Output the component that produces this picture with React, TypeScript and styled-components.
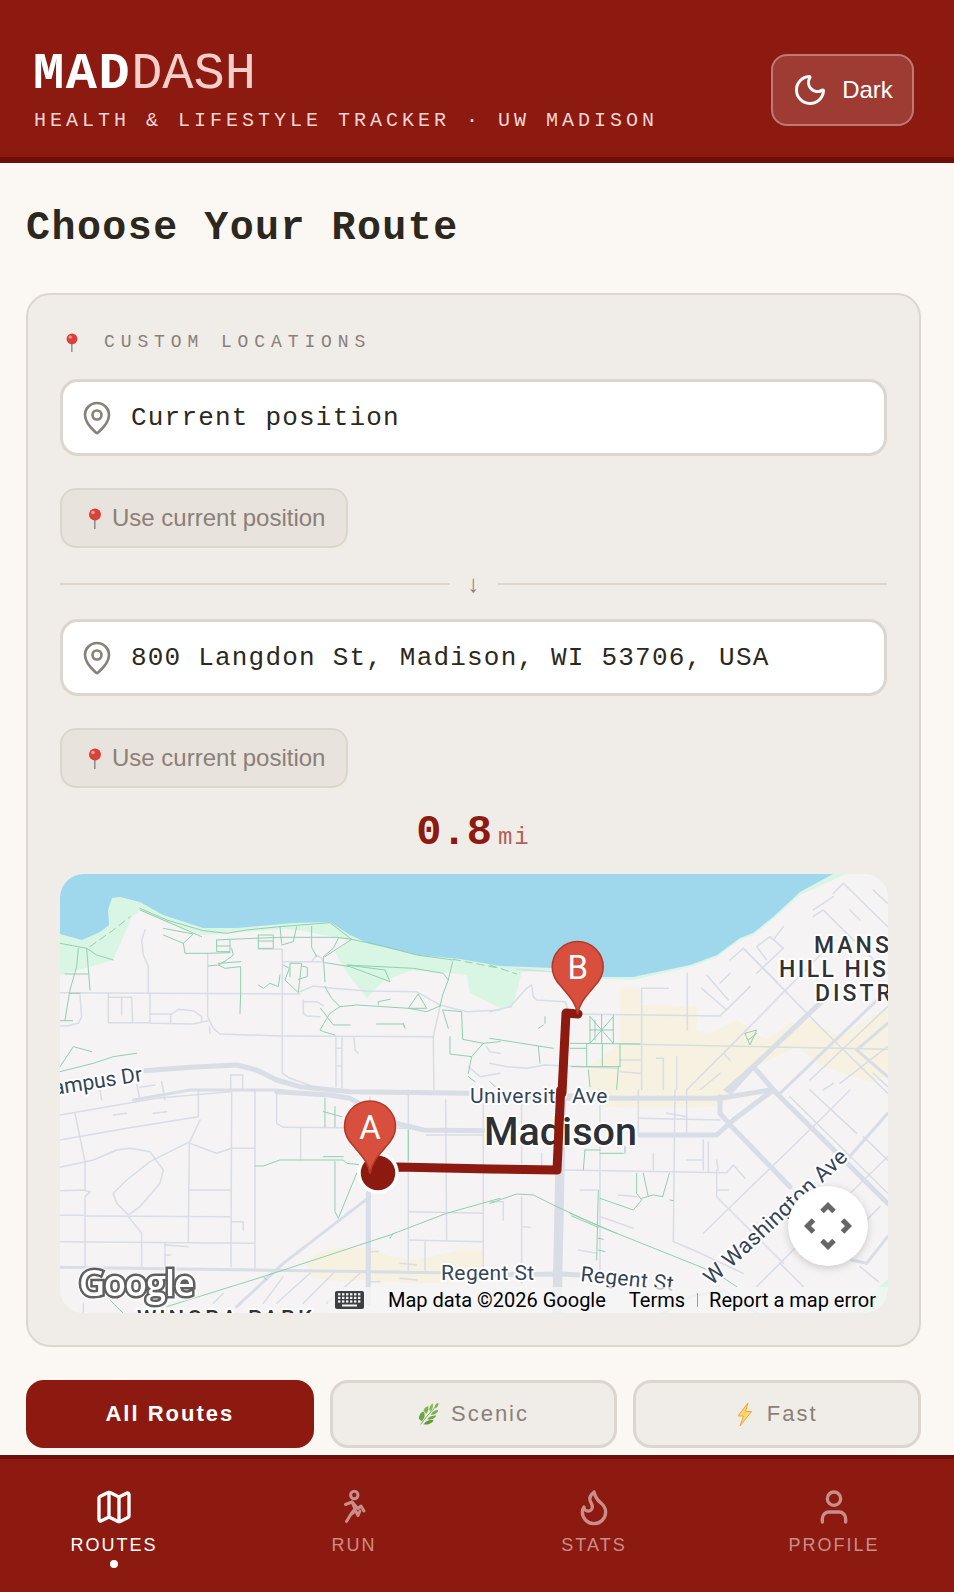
import React from "react";
import styled, { createGlobalStyle } from "styled-components";
import { Moon, MapPin, Map as MapIcon, Flame, User } from "lucide-react";

const Global = createGlobalStyle`
  html, body { margin: 0; padding: 0; background: #fbf8f4; }
  * { box-sizing: border-box; }
`;

const MONO = `"Liberation Mono", "Courier New", monospace`;
const SANS = `"Liberation Sans", Arial, sans-serif`;
const ROBOTO = `Roboto, "Liberation Sans", sans-serif`;

const Page = styled.div`
  width: 954px;
  height: 1592px;
  display: flex;
  flex-direction: column;
  overflow: hidden;
  background: #fbf8f4;
`;

const Header = styled.header`
  height: 163px;
  flex: none;
  background: #8d1a10;
  border-bottom: 6px solid #6b0f08;
  padding: 52px 40px 0 33px;
  display: flex;
  justify-content: space-between;
  align-items: flex-start;
`;
const Brand = styled.div`
  display: flex;
  flex-direction: column;
`;
const Logo = styled.div`
  font-family: ${MONO};
  font-size: 52px;
  line-height: 46px;
  color: #f7cfca;
`;
const LogoStrong = styled.span`
  font-weight: 700;
  color: #fff;
  letter-spacing: 1.5px;
`;
const Tagline = styled.div`
  margin-top: 11px;
  padding-left: 1px;
  font-family: ${MONO};
  font-size: 20px;
  line-height: 24px;
  letter-spacing: 4px;
  color: #f3d6d2;
  white-space: nowrap;
`;
const ThemeButton = styled.button`
  margin-top: 2px;
  width: 143px;
  height: 72px;
  border: 2px solid rgba(255, 255, 255, 0.32);
  border-radius: 16px;
  background: rgba(255, 255, 255, 0.15);
  color: #fff;
  font-family: ${SANS};
  font-size: 24px;
  display: flex;
  align-items: center;
  justify-content: center;
  gap: 14px;
  padding: 0;
`;

const Main = styled.main`
  flex: 1;
  min-height: 0;
  overflow: hidden;
  padding: 0 33px 0 26px;
`;
const Title = styled.h1`
  margin: 41px 0 0;
  font-family: ${MONO};
  font-weight: 700;
  font-size: 40px;
  line-height: 50px;
  letter-spacing: 1.45px;
  color: #2c2820;
`;
const Card = styled.section`
  margin-top: 39px;
  background: #f0ede8;
  border: 2px solid #dcd6cf;
  border-radius: 24px;
  padding: 32px;
`;
const SectionLabel = styled.div`
  display: flex;
  align-items: center;
  height: 28px;
  margin-top: 1px;
  gap: 25px;
  padding-left: 5px;
  font-family: ${MONO};
  font-size: 18px;
  letter-spacing: 5.9px;
  color: #8a8078;
`;
const InputBox = styled.div<{ $top: number }>`
  margin-top: ${(p) => p.$top}px;
  height: 77px;
  background: #fff;
  border: 3px solid #dcd6cf;
  border-radius: 18px;
  display: flex;
  align-items: center;
  padding-left: 16px;
  gap: 16px;
  color: #8a8078;
`;
const InputText = styled.span`
  font-family: ${MONO};
  font-size: 26px;
  letter-spacing: 1.2px;
  color: #2c2820;
  white-space: nowrap;
`;
const LocateButton = styled.button`
  display: flex;
  align-items: center;
  gap: 10px;
  margin-top: 32px;
  width: 288px;
  height: 60px;
  background: #e9e3dd;
  border: 2px solid #dcd5cc;
  border-radius: 16px;
  padding: 0 0 0 26px;
  font-family: ${SANS};
  font-size: 24px;
  color: #8a8078;
  white-space: nowrap;
`;
const Divider = styled.div`
  display: flex;
  align-items: center;
  height: 71px;
  gap: 18px;
  color: #8a8078;
  font-family: ${SANS};
  font-size: 24px;
`;
const DividerLine = styled.span`
  flex: 1;
  height: 2px;
  background: #dcd6cf;
`;
const Distance = styled.div`
  height: 86px;
  padding-top: 21px;
  display: flex;
  justify-content: center;
  align-items: baseline;
  gap: 6px;
  font-family: ${MONO};
  color: #8d1a10;
`;
const DistanceValue = styled.span`
  font-size: 42px;
  line-height: 48px;
  font-weight: 700;
`;
const DistanceUnit = styled.span`
  font-size: 24px;
  letter-spacing: 2px;
  color: #b2605a;
`;

const MapBox = styled.div`
  position: relative;
  width: 828px;
  height: 439px;
  border-radius: 24px;
  overflow: hidden;
  background: #f5f3f4;
`;
const MapSvg = styled.svg`
  display: block;
`;
const Roads = styled.g<{ $w: number; $c?: string }>`
  fill: none;
  stroke: ${(p) => p.$c || "#d8dde6"};
  stroke-width: ${(p) => p.$w};
  stroke-linecap: round;
  stroke-linejoin: round;
`;
const MapLabel = styled.text<{ $size: number; $weight?: number; $color?: string; $spacing?: number }>`
  font-family: ${ROBOTO};
  font-size: ${(p) => p.$size}px;
  font-weight: ${(p) => p.$weight || 400};
  fill: ${(p) => p.$color || "#33445a"};
  letter-spacing: ${(p) => p.$spacing || 0}px;
  stroke: #fff;
  stroke-width: 4px;
  stroke-linejoin: round;
  paint-order: stroke fill;
`;
const PinLetter = styled.text`
  font-family: ${ROBOTO};
  font-size: 33px;
  fill: #fff;
  text-anchor: middle;
`;
const GoogleMark = styled.div`
  position: absolute;
  left: 19px;
  top: 384px;
  font-family: "Open Sans", ${ROBOTO};
  font-weight: 600;
  font-size: 36px;
  line-height: 50px;
  letter-spacing: -1px;
  color: #fff;
  -webkit-text-stroke: 5px #5f5f5f;
  paint-order: stroke fill;
  filter: drop-shadow(0 0 1.5px #fff) drop-shadow(0 0 1px #fff);
`;
const Attribution = styled.div`
  position: absolute;
  right: 0;
  bottom: 0;
  height: 26px;
  width: 560px;
  background: rgba(245, 245, 245, 0.75);
  display: flex;
  align-items: center;
  padding-left: 7px;
  font-family: ${ROBOTO};
  font-size: 20px;
  color: #000;
  white-space: nowrap;
`;
const AttrData = styled.span`
  margin-left: 24px;
`;
const AttrTerms = styled.span`
  margin-left: 23px;
`;
const AttrSep = styled.span`
  width: 1px;
  height: 14px;
  background: #8aa0c0;
  margin: 0 11px 0 12px;
`;
const FullscreenButton = styled.div`
  position: absolute;
  left: 728px;
  top: 312px;
  width: 80px;
  height: 80px;
  border-radius: 50%;
  background: #fff;
  box-shadow: 0 2px 8px rgba(0, 0, 0, 0.18);
`;

const FilterRow = styled.div`
  margin-top: 33px;
  display: grid;
  grid-template-columns: repeat(3, 1fr);
  gap: 16px;
`;
const FilterButton = styled.button<{ $active?: boolean }>`
  height: 68px;
  border-radius: 18px;
  border: 3px solid ${(p) => (p.$active ? "#8d1a10" : "#dcd6cf")};
  background: ${(p) => (p.$active ? "#8d1a10" : "#f0ede8")};
  color: ${(p) => (p.$active ? "#fff" : "#8a8078")};
  font-family: ${SANS};
  font-size: 22px;
  font-weight: ${(p) => (p.$active ? 700 : 400)};
  letter-spacing: 2px;
  display: flex;
  align-items: center;
  justify-content: center;
  gap: 11px;
  padding: 0;
`;

const Nav = styled.nav`
  height: 137px;
  flex: none;
  background: #8d1a10;
  border-top: 4px solid #6b0f08;
  display: flex;
  justify-content: space-between;
  padding: 26px 68px 0 62px;
`;
const NavItem = styled.div<{ $active?: boolean }>`
  width: 104px;
  display: flex;
  flex-direction: column;
  align-items: center;
  color: ${(p) => (p.$active ? "#fff" : "#c98e89")};
`;
const NavIconSlot = styled.div`
  height: 44px;
  display: flex;
  align-items: center;
  justify-content: center;
`;
const NavLabel = styled.span`
  margin-top: 4px;
  font-family: ${SANS};
  font-size: 18px;
  line-height: 24px;
  letter-spacing: 2px;
`;
const NavDot = styled.span`
  margin-top: 3px;
  width: 8px;
  height: 8px;
  border-radius: 50%;
  background: #fff;
`;

const PinEmoji = ({ w = 14, h = 21 }: { w?: number; h?: number }) => (
  <svg width={w} height={h} viewBox="0 0 14 21" style={{ flex: "none" }}>
    <rect x="6" y="9" width="1.6" height="12" fill="#8f8f8f" />
    <circle cx="7" cy="6.5" r="6" fill="#d8423a" />
    <circle cx="5" cy="4.5" r="1.8" fill="#f49a90" />
  </svg>
);
const LeafEmoji = () => (
  <svg width="22" height="24" viewBox="0 0 24 30" preserveAspectRatio="none" style={{ flex: "none" }}>
    <path d="M3 28 C7 21 12 15 20 5" stroke="#6e9a45" strokeWidth="1" fill="none" />
    <path d="M1 21 C1 15 4 13 6 12 C8 15 8 20 4 24 Z" fill="#6aa63f" />
    <path d="M6 28 C9 23 13 22 17 23 C15 27 10 29 6 28 Z" fill="#5e9b38" />
    <path d="M6 11 C7 7 9 6 11 5 C12 8 11 12 9 15 Z" fill="#7db54c" />
    <path d="M10 22 C12 18 16 17 20 17 C19 20 15 23 10 22 Z" fill="#6cab41" />
    <path d="M12 9 C13 5 14 3 16 2 C17 5 16 9 14 12 Z" fill="#86bd55" />
    <path d="M14 16 C15 12 19 10 22 10 C22 13 19 16 14 16 Z" fill="#76b148" />
    <path d="M18 7 C18 4 20 2 22 1 C23 3 22 6 19 8 Z" fill="#7db54c" />
  </svg>
);
const BoltEmoji = () => (
  <svg width="19" height="25" viewBox="0 0 19 25" style={{ flex: "none" }}>
    <path d="M11 1 L1 14 L6.5 14 L3 24 L14.5 9.5 L8.5 9.5 Z" fill="#fbd76a" stroke="#f0a63c" strokeWidth="1" strokeLinejoin="round" />
  </svg>
);
const RunIcon = () => (
  <svg width="30" height="42" viewBox="8 4 30 42" fill="none" stroke="currentColor" strokeWidth="3" strokeLinejoin="round" strokeLinecap="round">
    <circle cx="23.3" cy="13" r="3.7" />
    <path d="M14.5 22.5 L21 20 L24 27 L20 32 L15.5 39.5" />
    <path d="M21 20 L27 26.5 L30 24 L33 29" />
    <path d="M20.5 32 L24.5 28.5 L27 33.5 L29 29" />
  </svg>
);

const green = "#8fd0b0";

const Q1 = {
  yellow: [] as string[],
  thin: [
    "30,398 750,402",
    "285,210 275,240 280,285 295,320 295,398",
    "175,402 175,488 300,488 300,402",
    "175,412 245,412 248,488",
    "215,412 215,465",
    "300,462 362,462",
    "362,490 362,465 385,448 430,452 455,470 455,485",
    "300,490 430,492 475,482",
    "473,280 473,470 490,505 510,522 695,528",
    "695,268 625,268",
    "697,268 697,640 720,655 790,680",
    "700,305 820,305",
    "785,305 800,285 815,295 820,305",
    "695,528 1150,530",
    "858,530 858,680",
    "876,530 876,685",
    "858,565 876,565",
    "858,618 876,618",
    "912,532 915,570 925,580",
    "1170,440 1150,530 1152,690",
    "760,420 760,460 770,468 810,470",
    "760,425 800,425 820,437",
    "90,405 95,470 85,490 50,498 30,498",
    "480,520 478,500",
    "542,645 542,690",
    "578,645 578,690",
    "542,645 578,645",
    "260,670 270,720",
    "335,665 345,720",
    "270,682 315,675",
    "150,690 155,720",
    "1255,620 1290,650 1350,640",
    "1310,560 1320,575 1350,580",
    "750,395 790,378 850,385 950,393 1100,395 1170,435 1250,455 1350,450",
  ],
  thick: ["285,632 420,622 560,615 620,630 680,660 750,680 900,695 1260,700"],
  mid: ["250,720 420,690 680,690 800,705"],
  green: [
    "30,250 110,265 120,390",
    "110,265 140,285 190,300",
    "270,145 350,180 460,212 530,220 590,210 690,200 840,188 905,238 1000,258 1100,285 1210,300",
    "270,150 340,180 455,230",
    "85,265 80,320 60,390 45,480",
    "45,342 115,342",
    "30,482 68,482",
    "60,400 90,400",
    "340,225 400,250 430,222 340,205",
    "400,250 405,280 473,280 540,278",
    "500,240 540,238 540,275 500,275 500,240",
    "500,258 540,258",
    "540,238 690,232 860,232 905,238",
    "625,225 670,225 670,265 625,265 625,225",
    "625,243 670,243",
    "545,265 550,285 530,300 505,315 475,318",
    "505,315 525,325 572,320 572,400 570,460",
    "505,310 572,305",
    "690,200 695,250",
    "740,200 730,245 695,255",
    "785,200 785,262 800,290",
    "865,235 850,265 820,290",
    "820,290 825,365",
    "905,238 825,290",
    "825,308 900,320 1020,365 1005,330 890,315 1090,325 1180,340 1195,360",
    "700,315 718,325 705,360 745,398 755,310 720,310 720,350",
    "755,318 772,322 772,350 745,358",
    "625,375 640,385 660,370 685,380 690,345",
    "1208,305 1195,360 1178,405 1170,440",
    "825,380 845,415 870,440 840,460 810,510 820,515 855,525",
    "812,445 850,495 900,495",
    "870,440 920,435 1075,445 1130,455 1170,438",
    "1105,402 1075,445 1130,445 1105,402",
    "985,435 985,425 1020,418",
    "980,492 1060,492 1065,505 1060,490",
    "1178,450 1195,505",
    "1180,450 1235,455 1238,538 1300,550 1265,590 1255,640",
    "1200,530 1200,582 1265,590",
    "1300,550 1350,545",
    "1255,650 1275,665",
    "30,620 70,560 125,575",
    "30,635 130,610 190,590 260,580",
  ],
  dashed: ["120,260 190,210 240,170", "1210,298 1350,325"],
};

const Q2 = {
  yellow: [
    "390,385 450,385 450,435 620,440 620,510 660,520 740,480 830,540 900,490 960,480 1050,530 1193,440 1193,640 1150,670 1000,620 920,560 800,620 700,720 300,720 295,620 390,550",
  ],
  thin: [
    "80,328 185,335",
    "0,455 60,440 110,385 125,375 130,410 140,420 225,425 235,450",
    "250,462 690,468 780,380",
    "455,385 535,385",
    "455,385 455,700",
    "592,340 592,510",
    "635,385 710,450",
    "650,345 715,420",
    "690,370 720,340",
    "720,300 760,265 860,365",
    "760,265 1000,510 1193,700",
    "800,340 880,265 840,230 800,260 830,300",
    "850,240 880,200",
    "580,700 720,560 1035,240",
    "970,150 1030,110",
    "970,170 1000,150 1060,210 1193,340",
    "1030,100 1060,70 1193,200",
    "1080,150 1110,180",
    "1150,90 1193,130",
    "395,552 1193,568",
    "390,600 450,600",
    "390,635 450,640",
    "500,595 520,595 520,700",
    "560,590 560,700",
    "0,610 50,620 110,625 165,615 380,625",
    "960,660 1193,440",
    "700,580 720,600",
    "1050,670 1193,560",
    "1000,690 1030,670",
    "1150,640 1193,680",
    "630,690 690,640",
  ],
  mid: ["1193,490 1100,570 1193,650", "870,700 1193,390"],
  thick: ["0,708 690,708 790,620 860,700", "700,720 790,620 1005,415"],
  green: [
    "0,535 190,565",
    "145,560 150,610",
    "165,470 165,490",
    "160,495 145,505",
    "300,470 300,550",
    "370,465 370,550",
    "300,470 370,550",
    "370,470 300,550",
    "315,480 315,540",
    "335,465 335,550",
    "300,510 370,510",
    "240,550 450,552",
    "240,565 290,565",
    "245,620 390,620",
    "290,552 290,620",
    "337,552 337,620",
    "390,552 390,620",
    "295,630 300,680",
    "385,620 380,690",
    "765,520 800,510 780,555 765,520",
    "775,540 800,520",
    "0,665 15,680",
  ],
  dashed: ["0,315 80,342"],
};

const Q3 = {
  yellow: ["770,525 800,490 860,475 980,475 1000,495 1100,510 1230,480 1300,480 1300,575 1100,580 930,570 875,575 780,560"],
  thin: [
    "30,75 320,25 540,5",
    "30,150 230,115 445,80 445,0",
    "75,70 105,215 105,300",
    "30,232 130,210 200,180 240,175 300,185 340,240 330,280 270,350 235,375 200,340 190,310 230,270 300,215 420,155 450,90",
    "30,302 100,300 120,305 105,320 105,530",
    "105,378 540,380",
    "30,376 105,376",
    "30,455 610,460",
    "418,160 415,455",
    "415,300 545,300",
    "545,0 543,530",
    "615,0 615,535",
    "275,530 275,430 235,380",
    "345,460 345,535",
    "345,465 415,470",
    "345,495 360,495",
    "545,395 580,395 580,420",
    "680,0 680,100 700,112 1075,115",
    "752,115 752,210",
    "1075,0 1075,540",
    "1187,30 1190,450",
    "1130,135 1300,135",
    "1075,365 1300,370",
    "1075,450 1300,455",
    "1125,455 1125,540",
    "1300,0 1300,540",
    "960,20 960,60",
    "420,160 500,190 545,175 615,175",
    "190,75 230,70",
    "310,70 350,65",
    "700,560 640,640",
    "780,550 680,640",
    "850,550 760,640",
    "930,550 830,640",
    "490,640 520,610",
    "100,640 100,670",
    "960,575 990,575",
    "960,485 985,485",
    "1050,520 1100,525",
    "1050,565 1100,570",
  ],
  mid: ["960,320 700,520 560,650", "30,532 1170,548"],
  thick: ["955,310 955,640", "680,5 840,15 900,25 1040,100 1120,120 1300,122"],
  green: [
    "615,228 640,228 690,210 880,210 890,220 940,225",
    "820,200 880,200",
    "855,215 855,365 865,385 920,250",
    "1075,120 1075,210",
    "825,25 825,110",
    "855,50 855,110",
    "820,65 875,80",
    "350,650 640,560 1020,435 1190,370 1350,325",
    "1030,430 1020,445",
    "640,560 650,570",
    "180,630 220,670",
  ],
  dashed: [] as string[],
};

const Q4 = {
  yellow: ["335,50 480,55 690,50 730,20 700,0 335,0"],
  thin: [
    "225,240 710,248 730,225 765,265",
    "330,0 330,540",
    "95,0 95,220",
    "155,190 155,225",
    "490,190 490,240",
    "555,0 550,455 610,480 760,550",
    "640,150 640,240",
    "655,155 655,245",
    "680,210 685,240",
    "590,210 635,210",
    "680,240 680,320 880,520",
    "680,300 715,300",
    "270,300 320,300",
    "385,315 440,320",
    "0,335 40,335 40,390",
    "95,320 95,580",
    "100,410 120,412",
    "330,380 430,415",
    "265,480 320,490",
    "640,430 1000,80 1080,0",
    "900,20 1193,310",
    "960,0 1100,130",
    "1120,140 1193,210",
    "1170,350 1090,430",
    "1110,530 1165,575",
    "800,590 1020,370 1193,200",
    "870,520 940,590",
    "445,0 445,130",
    "590,0 590,130",
    "530,70 590,80",
    "450,85 690,90",
  ],
  mid: ["1070,210 1193,70", "1193,440 1130,520 1085,510", "1100,670 1193,610", "520,670 600,620 700,600 800,670"],
  thick: [
    "0,25 690,25 840,0",
    "450,135 680,135 730,90 850,0",
    "690,20 690,70 730,115 900,290",
    "850,0 1193,340",
    "0,555 210,552 270,555",
  ],
  wide: ["215,0 200,700"],
  green: [
    "0,340 80,312 130,315 190,345 330,410 680,550 740,590",
    "240,370 380,430",
    "245,378 325,412",
    "325,300 320,510",
    "325,445 340,448",
    "325,480 345,485",
    "285,180 280,240",
    "285,180 330,180",
    "330,190 400,190",
    "405,170 405,190",
    "440,250 440,310 455,330 430,360 330,325",
    "460,250 475,320",
    "538,250 518,320",
    "455,325 490,315 518,320",
    "540,330 550,332",
  ],
  dashed: [] as string[],
};

type Quad = {
  yellow: string[];
  thin: string[];
  mid: string[];
  thick: string[];
  wide?: string[];
  green: string[];
  dashed: string[];
};

const Lines = ({ items }: { items: string[] }) => (
  <>
    {items.map((p, i) => (
      <polyline key={i} points={p} />
    ))}
  </>
);

const Quadrant = ({ q, x, y }: { q: Quad; x: number; y: number }) => (
  <g transform={`translate(${x} ${y}) scale(0.3333)`}>
    {q.yellow.map((p, i) => (
      <polygon key={i} points={p} fill="#f6f1e0" />
    ))}
    <Roads $w={4.5}>
      <Lines items={q.thin} />
    </Roads>
    <Roads $w={9}>
      <Lines items={q.mid} />
    </Roads>
    <Roads $w={15}>
      <Lines items={q.thick} />
    </Roads>
    <Roads $w={28}>
      <Lines items={q.wide || []} />
    </Roads>
    <Roads $w={3} $c={green}>
      <Lines items={q.green} />
    </Roads>
    <Roads $w={3} $c={green} strokeDasharray="22 14">
      <Lines items={q.dashed} />
    </Roads>
  </g>
);

const PIN_PATH =
  "M0 0 C-2 -12 -9 -18 -16 -27 C-22 -33 -25.5 -39 -25.5 -47 A25.5 25.5 0 1 1 25.5 -47 C25.5 -39 22 -33 16 -27 C9 -18 2 -12 0 0 Z";

const Marker = ({ x, y, letter }: { x: number; y: number; letter: string }) => (
  <g transform={`translate(${x} ${y})`}>
    <path d={PIN_PATH} fill="#d94f3d" stroke="#b33a2b" strokeWidth="1.6" />
    <PinLetter x="0" y="-35">
      {letter}
    </PinLetter>
  </g>
);

const COAST =
  "0,60 22,66 40,58 49,51 48,36 52,24 60,23 80,28 103,41 143,54 177,54 233,49 270,48 290,61 310,70 357,81 400,85 440,92 493,94 543,103 573,103 630,91 657,81 680,64 693,59 713,43 740,18 773,0";

const MapDrawing = () => (
  <MapSvg width="828" height="439" viewBox="0 0 828 439">
    <rect width="828" height="439" fill="#f5f3f4" />
    <polygon
      fill="#d9f5e3"
      points="0,55 0,101 29,93 53,86 72,43 80,36 107,49 143,61 170,59 223,55 237,56 292,66 275,78 287,99 307,124 323,107 353,96 390,99 407,101 410,119 440,134 452,134 462,98 490,96 543,105 573,106 630,93 657,83 680,66 693,61 713,45 740,21 786,0 0,0"
    />
    <polygon fill="#9fd7ec" points={`${COAST} 0,0`} />
    <Quadrant q={Q2 as Quad} x={430} y={-14} />
    <Quadrant q={Q1 as Quad} x={-10} y={-14} />
    <Quadrant q={Q4 as Quad} x={430} y={216} />
    <Quadrant q={Q3 as Quad} x={-10} y={216} />

    <polygon fill="#d9f5e3" points="790,439 828,405 828,439" />

    <MapLabel $size={21} x="83" y="207" textAnchor="end" transform="rotate(-9 83 207)">
      Campus Dr
    </MapLabel>
    <MapLabel $size={21} x="410" y="229" $spacing={0.5}>
      University Ave
    </MapLabel>
    <MapLabel $size={39.5} $weight={500} x="424" y="271" $color="#2d3036">
      Madison
    </MapLabel>
    <MapLabel $size={23} $weight={500} x="754" y="79" $color="#2f3338" $spacing={3}>
      MANS
    </MapLabel>
    <MapLabel $size={23} $weight={500} x="719" y="103" $color="#2f3338" $spacing={2.4}>
      HILL HIS
    </MapLabel>
    <MapLabel $size={23} $weight={500} x="755" y="127" $color="#2f3338" $spacing={3}>
      DISTR
    </MapLabel>
    <MapLabel $size={21} x="381" y="406" $spacing={0.4}>
      Regent St
    </MapLabel>
    <MapLabel $size={21} x="520" y="407" transform="rotate(6 520 407)" $spacing={0.4}>
      Regent St
    </MapLabel>
    <MapLabel $size={22} x="652" y="412" transform="rotate(-43 652 412)" $spacing={0.3}>
      W Washington Ave
    </MapLabel>
    <MapLabel $size={22} $weight={500} x="77" y="452" $color="#2f3338" $spacing={3}>
      WINGRA PARK
    </MapLabel>

    <polyline
      points="318,299 337,293 430,295 497,296 500.7,216 502,219 506,139 518,140"
      fill="none"
      stroke="#8d1a10"
      strokeWidth="9"
      strokeLinejoin="round"
      strokeLinecap="round"
    />
    <circle cx="318" cy="299" r="19" fill="#8d1a10" stroke="#fff" strokeWidth="3.5" />
    <Marker x={310} y={299.5} letter="A" />
    <Marker x={517.7} y={140} letter="B" />
  </MapSvg>
);

const Keyboard = () => (
  <svg width="29" height="18" viewBox="0 0 29 18" style={{ flex: "none" }}>
    <rect width="29" height="18" rx="2" fill="#3c4043" />
    <g fill="#f5f5f5">
      {[0, 1, 2].map((r) =>
        [0, 1, 2, 3, 4, 5].map((c) => (
          <rect key={`${r}${c}`} x={3 + c * 4} y={2.2 + r * 3.6} width="2.4" height="2.2" />
        ))
      )}
      <rect x="7" y="13.5" width="15" height="2" />
    </g>
  </svg>
);

const Chevrons = () => (
  <svg width="80" height="80" viewBox="0 0 80 80" fill="none" stroke="#666" strokeWidth="5">
    <polyline points="34,25.5 40,19.5 46,25.5" />
    <polyline points="34,54.5 40,60.5 46,54.5" />
    <polyline points="25.5,34 19.5,40 25.5,46" />
    <polyline points="54.5,34 60.5,40 54.5,46" />
  </svg>
);

export default function App() {
  return (
    <Page>
      <Global />
      <Header>
        <Brand>
          <Logo>
            <LogoStrong>MAD</LogoStrong>DASH
          </Logo>
          <Tagline>HEALTH &amp; LIFESTYLE TRACKER · UW MADISON</Tagline>
        </Brand>
        <ThemeButton>
          <Moon size={36} strokeWidth={2} />
          Dark
        </ThemeButton>
      </Header>
      <Main>
        <Title>Choose Your Route</Title>
        <Card>
          <SectionLabel>
            <PinEmoji w={14} h={19} />
            CUSTOM LOCATIONS
          </SectionLabel>
          <InputBox $top={23}>
            <MapPin size={36} strokeWidth={1.8} />
            <InputText>Current position</InputText>
          </InputBox>
          <LocateButton>
            <PinEmoji />
            Use current position
          </LocateButton>
          <Divider>
            <DividerLine />
            ↓
            <DividerLine />
          </Divider>
          <InputBox $top={0}>
            <MapPin size={36} strokeWidth={1.8} />
            <InputText>800 Langdon St, Madison, WI 53706, USA</InputText>
          </InputBox>
          <LocateButton>
            <PinEmoji />
            Use current position
          </LocateButton>
          <Distance>
            <DistanceValue>0.8</DistanceValue>
            <DistanceUnit>mi</DistanceUnit>
          </Distance>
          <MapBox>
            <MapDrawing />
            <GoogleMark>Google</GoogleMark>
            <Attribution>
              <Keyboard />
              <AttrData>Map data ©2026 Google</AttrData>
              <AttrTerms>Terms</AttrTerms>
              <AttrSep />
              Report a map error
            </Attribution>
            <FullscreenButton>
              <Chevrons />
            </FullscreenButton>
          </MapBox>
        </Card>
        <FilterRow>
          <FilterButton $active>All Routes</FilterButton>
          <FilterButton>
            <LeafEmoji />
            Scenic
          </FilterButton>
          <FilterButton>
            <BoltEmoji />
            Fast
          </FilterButton>
        </FilterRow>
      </Main>
      <Nav>
        <NavItem $active>
          <NavIconSlot>
            <MapIcon size={40} strokeWidth={2} />
          </NavIconSlot>
          <NavLabel>ROUTES</NavLabel>
          <NavDot />
        </NavItem>
        <NavItem>
          <NavIconSlot>
            <RunIcon />
          </NavIconSlot>
          <NavLabel>RUN</NavLabel>
        </NavItem>
        <NavItem>
          <NavIconSlot>
            <Flame size={40} strokeWidth={2} />
          </NavIconSlot>
          <NavLabel>STATS</NavLabel>
        </NavItem>
        <NavItem>
          <NavIconSlot>
            <User size={40} strokeWidth={2} />
          </NavIconSlot>
          <NavLabel>PROFILE</NavLabel>
        </NavItem>
      </Nav>
    </Page>
  );
}
